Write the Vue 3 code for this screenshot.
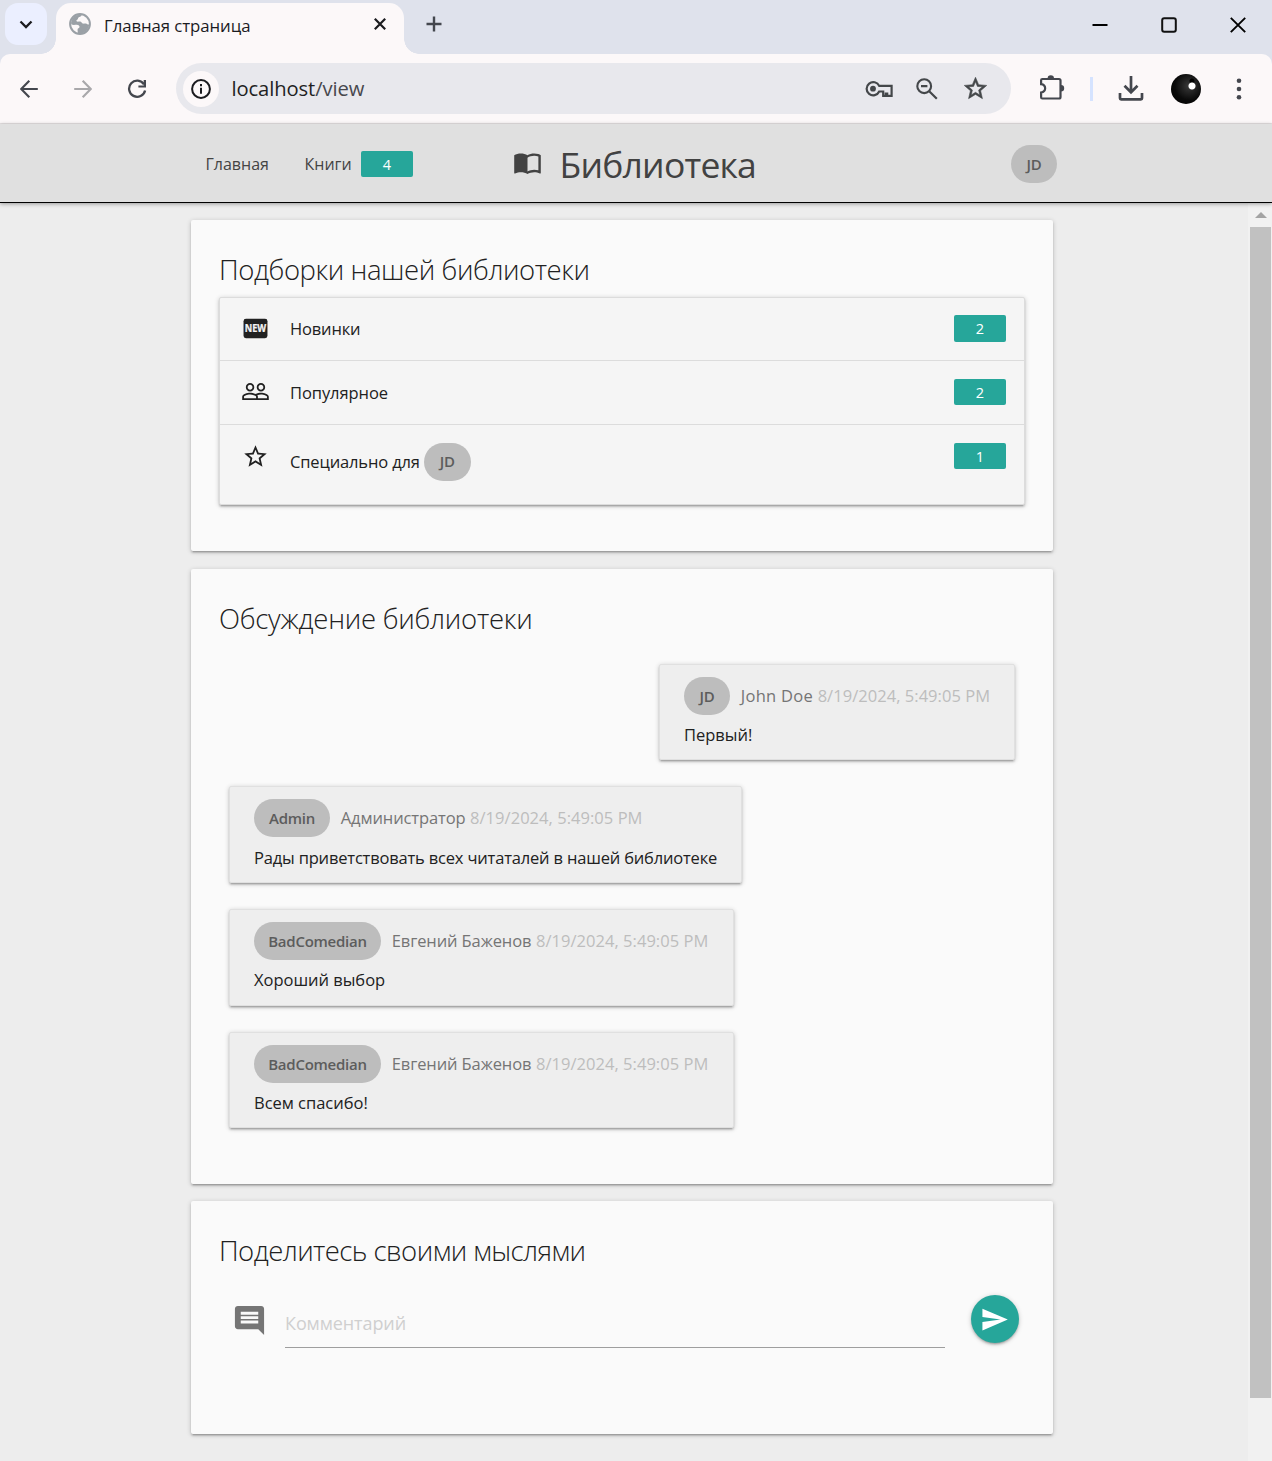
<script setup>
import { ref } from 'vue'

const draft = ref('')

const icons = {
  people:
    'M16.5 13c-1.2 0-3.07.34-4.5 1-1.43-.67-3.3-1-4.5-1C5.33 13 1 14.08 1 16.25V19h22v-2.75c0-2.17-4.33-3.25-6.5-3.25zm-4 4.5h-10v-1.25c0-.54 2.56-1.75 5-1.75s5 1.21 5 1.75v1.25zm9 0H14v-1.25c0-.46-.2-.86-.52-1.22.88-.3 1.96-.53 3.02-.53 2.44 0 5 1.21 5 1.75v1.25zM7.5 12c1.93 0 3.5-1.57 3.5-3.5S9.43 5 7.5 5 4 6.57 4 8.5 5.57 12 7.5 12zm0-5.5c1.1 0 2 .9 2 2s-.9 2-2 2-2-.9-2-2 .9-2 2-2zm9 5.5c1.93 0 3.5-1.57 3.5-3.5S18.43 5 16.5 5 13 6.57 13 8.5s1.57 3.5 3.5 3.5zm0-5.5c1.1 0 2 .9 2 2s-.9 2-2 2-2-.9-2-2 .9-2 2-2z',
  star:
    'M22 9.24l-7.19-.62L12 2 9.19 8.63 2 9.24l5.46 4.73L5.82 21 12 17.27 18.18 21l-1.63-7.03L22 9.24zM12 15.4l-3.76 2.27 1-4.28-3.32-2.88 4.38-.38L12 6.1l1.71 4.04 4.38.38-3.32 2.88 1 4.28L12 15.4z',
}

const collections = [
  { icon: 'new', title: 'Новинки', count: 2, cls: 'row-new' },
  { icon: 'people', title: 'Популярное', count: 2, cls: 'row-popular' },
  { icon: 'star', title: 'Специально для', count: 1, user: 'JD', cls: 'row-special' },
]

const comments = [
  { login: 'JD', name: 'John Doe', text: 'Первый!', own: true, cls: 'c-john' },
  { login: 'Admin', name: 'Администратор', text: 'Рады приветствовать всех читаталей в нашей библиотеке', cls: 'c-admin' },
  { login: 'BadComedian', name: 'Евгений Баженов', text: 'Хороший выбор', cls: 'c-bad' },
  { login: 'BadComedian', name: 'Евгений Баженов', text: 'Всем спасибо!', cls: 'c-bad' },
]
const date = '8/19/2024, 5:49:05 PM'
</script>

<template>
  <div class="window">
    <div class="tabstrip">
      <div class="tab-search">
        <svg width="14" height="9" viewBox="0 0 14 9"><path d="M1.5 1.5 7 7l5.500-5.500" fill="none" stroke="#1b1b1f" stroke-width="2.300" /></svg>
      </div>
      <div class="tab">
        <svg class="favicon" width="22" height="22" viewBox="0 0 22 22">
          <circle cx="11" cy="11" r="9.900" fill="#fcf8f9" stroke="#9aa0a6" stroke-width="2" />
          <path d="M12.800 1.500c-.2 1.800-1.300 2.300-2.600 2.600-1.300.4-.8 1.600-1.700 2.400-.8.600-1.500.9-.9 1.700.8.900 2.400.1 3.700.4 1.400.3 1.300 1.800 2.700 2 1.600.2 2.600-.4 3.900.3.900.5 1.400.8 2.300.7-.3 3.700-3 7.500-6.900 8.700-1.700.500-3.300.600-4.600.200.300-1.600-.300-3-.1-4.200.200-1.200 1.700-1.100 1.900-2.300.2-1.300-.9-2.300-2.700-2.300-1.700 0-3.700.700-5.600-.5C1.500 6.500 5.500 1 12.800 1.500z" fill="#9aa0a6" transform="rotate(180 11 11)" />
        </svg>
        <span class="tab-title">Главная страница</span>
        <svg class="tab-close" width="12" height="12" viewBox="0 0 12 12"><path d="M.8.8l10.400 10.400M11.200.8.8 11.200" stroke="#1b1b1f" stroke-width="2.200" /></svg>
      </div>
      <svg class="tab-add" width="16" height="16" viewBox="0 0 16 16"><path d="M8 .5v15M.5 8h15" stroke="#44474e" stroke-width="2.400" /></svg>
      <div class="win-controls">
        <svg width="16" height="16" viewBox="0 0 16 16"><path d="M.5 8h15" stroke="#000" stroke-width="2" /></svg>
        <svg width="16" height="16" viewBox="0 0 16 16"><rect x="1.200" y="1.200" width="13.600" height="13.600" rx="2" fill="none" stroke="#111" stroke-width="2" /></svg>
        <svg width="16" height="16" viewBox="0 0 16 16"><path d="M.8.8l14.400 14.400M15.200.8.8 15.200" stroke="#000" stroke-width="1.900" /></svg>
      </div>
    </div>

    <div class="toolbar">
      <div class="nav-btn"><svg width="18" height="18" viewBox="0 0 18 18"><path d="M17.800 9H1.500M9.300.8 1.200 9l8.100 8.200" fill="none" stroke="#44474e" stroke-width="2.200" /></svg></div>
      <div class="nav-btn"><svg width="18" height="18" viewBox="0 0 18 18"><path d="M.2 9h16.300M8.700.8 16.800 9l-8.100 8.200" fill="none" stroke="#a9a8ab" stroke-width="2.200" /></svg></div>
      <div class="nav-btn"><svg width="20" height="20" viewBox="0 0 20 20"><path d="M17 5.300A8.100 8.100 0 1 0 18.100 11.500" fill="none" stroke="#44474e" stroke-width="2.300" /><path d="M19 1v7.600h-7.600V6.400h5.300V1z" fill="#44474e" /></svg></div>
      <div class="omnibox">
        <div class="site-info">
          <svg width="20" height="20" viewBox="0 0 20 20"><circle cx="10" cy="10" r="8.900" fill="none" stroke="#1b1b1f" stroke-width="2" /><path d="M10 8.800v6M10 5v2.200" stroke="#1b1b1f" stroke-width="2" /></svg>
        </div>
        <span class="url">localhost<span class="path">/view</span></span>
        <div class="box-btn">
          <svg width="28" height="18" viewBox="0 0 28 18">
            <path d="M13.600 6.200A6.600 6.600 0 1 0 13.600 11.800H17.600v4.400h2.600v-2.400h1.400v2.400h4.400V6.200z" transform="translate(.6 -.3)" fill="none" stroke="#44474a" stroke-width="2.200" />
            <circle cx="8" cy="8.700" r="2.900" fill="#44474a" />
          </svg>
        </div>
        <div class="box-btn">
          <svg width="22" height="22" viewBox="0 0 22 22"><circle cx="8.200" cy="8.200" r="6.900" fill="none" stroke="#44474a" stroke-width="2.100" /><path d="M5 8.200h6.400M13.200 13.200l7.600 7.600" stroke="#44474a" stroke-width="2.200" /></svg>
        </div>
        <div class="box-btn"><svg width="27" height="27" viewBox="0 0 24 24"><path :d="icons.star" fill="#44474a" stroke="#44474a" stroke-width=".5" /></svg></div>
      </div>
      <div class="ext-btn">
        <svg width="26" height="26" viewBox="0 0 26 26">
          <path d="M3.400 5H20a1.500 1.500 0 0 1 1.500 1.500V23a1.500 1.500 0 0 1-1.500 1.500H3.400A1.300 1.300 0 0 1 2.100 23.200V18.500C7.500 17.600 7.500 11 2.100 10.200V6.300A1.300 1.300 0 0 1 3.400 5z" fill="none" stroke="#44474e" stroke-width="2.200" />
          <path d="M8.600 4.500a3.200 3.200 0 0 1 6.400 0zM22 11a3.200 3.200 0 0 1 0 6.400z" fill="#44474e" />
        </svg>
      </div>
      <div class="divider"></div>
      <div class="dl-btn">
        <svg width="26" height="25" viewBox="0 0 26 25"><path d="M13 0v15.500M6.500 9.800 13 16.300l6.500-6.500M2 17v5.200c0 .6.500 1.100 1.100 1.100h19.800c.6 0 1.100-.5 1.100-1.100V17" fill="none" stroke="#44474e" stroke-width="2.700" /></svg>
      </div>
      <div class="profile"></div>
      <div class="menu-btn"><svg width="6" height="22" viewBox="0 0 6 22"><g fill="#44474e"><circle cx="3" cy="2.700" r="2.300" /><circle cx="3" cy="11" r="2.300" /><circle cx="3" cy="19.300" r="2.300" /></g></svg></div>
    </div>

    <header class="site-nav">
      <a class="nav-home">Главная</a>
      <a class="nav-books">Книги</a>
      <span class="badge">4</span>
      <div class="brand">
        <svg width="29" height="29" viewBox="0 0 24 24"><path fill="#424242" d="M21 5c-1.110-.350-2.330-.5-3.500-.5-1.950 0-4.050.4-5.500 1.500-1.450-1.100-3.550-1.500-5.500-1.500S2.450 4.900 1 6v14.650c0 .25.25.5.5.5.1 0 .15-.05.25-.05C3.100 20.450 5.050 20 6.500 20c1.950 0 4.050.4 5.500 1.500 1.350-.85 3.800-1.500 5.500-1.500 1.650 0 3.350.3 4.750 1.050.1.05.15.05.25.05.25 0 .5-.25.5-.5V6c-.6-.45-1.250-.75-2-1zm0 13.500c-1.100-.35-2.300-.5-3.500-.5-1.700 0-4.150.65-5.500 1.500V8c1.350-.85 3.800-1.500 5.500-1.500 1.200 0 2.400.15 3.500.5v11.500z" /></svg>
        <span>Библиотека</span>
      </div>
      <span class="chip chip-jd">JD</span>
    </header>

    <div class="viewport">
      <main>
        <section class="card card-collections">
          <h2 class="h-collections">Подборки нашей библиотеки</h2>
          <ul class="list">
            <li v-for="row in collections" :key="row.title" :class="row.cls">
              <svg v-if="row.icon === 'new'" class="row-icon" viewBox="0 0 24 24">
                <rect x="2.100" y="4" width="19.800" height="16" rx="2" fill="#212121" />
                <text x="12" y="14.900" text-anchor="middle" textLength="17.800" lengthAdjust="spacingAndGlyphs" class="new-label">NEW</text>
              </svg>
              <svg v-else class="row-icon" viewBox="0 0 24 24"><path :d="icons[row.icon]" fill="#212121" /></svg>
              <span class="row-title">{{ row.title }}</span>
              <span v-if="row.user" class="chip chip-jd">{{ row.user }}</span>
              <span class="badge">{{ row.count }}</span>
            </li>
          </ul>
        </section>

        <section class="card card-talk">
          <h2 class="h-talk">Обсуждение библиотеки</h2>
          <div class="comments">
            <article v-for="c in comments" :key="c.text" class="comment" :class="[c.cls, { own: c.own }]">
              <div class="comment-head">
                <span class="chip">{{ c.login }}</span>
                <span class="author">{{ c.name }}</span>
                <time>{{ date }}</time>
              </div>
              <p>{{ c.text }}</p>
            </article>
          </div>
        </section>

        <section class="card card-form">
          <h2 class="h-form">Поделитесь своими мыслями</h2>
          <form @submit.prevent>
            <svg class="comment-icon" width="35" height="35" viewBox="0 0 24 24"><path fill="#757575" d="M21.990 4c0-1.100-.89-2-1.990-2H4c-1.100 0-2 .9-2 2v12c0 1.100.9 2 2 2h14l4 4-.01-18zM18 14H6v-2h12v2zm0-3H6V9h12v2zm0-3H6V6h12v2z" /></svg>
            <input v-model="draft" placeholder="Комментарий" />
            <button class="send" aria-label="Отправить">
              <svg width="29" height="29" viewBox="0 0 24 24"><path fill="#fff" d="M2.010 21L23 12 2.010 3 2 10l15 2-15 2z" /></svg>
            </button>
          </form>
        </section>
      </main>
      <div class="scrollbar">
        <svg width="12" height="6" viewBox="0 0 12 6"><path d="M6 0l6 6H0z" fill="#a3a3a3" /></svg>
        <div class="thumb"></div>
      </div>
    </div>
  </div>
</template>

<style>
body {
  background: #ededed;
}
</style>

<style scoped>
* {
  box-sizing: border-box;
}
.window {
  width: 1272px;
  height: 1461px;
  overflow: hidden;
  display: flex;
  flex-direction: column;
  font-family: 'Open Sans', 'Noto Sans', sans-serif;
  font-size: 16.5px;
  color: #212121;
}
svg {
  display: block;
  flex: none;
}

/* browser tab strip */
.tabstrip {
  height: 54px;
  flex: none;
  display: flex;
  align-items: flex-start;
  padding: 3px 0 0 5px;
  background: #dfe2ec;
}
.tab-search {
  width: 42px;
  height: 42px;
  border-radius: 13px;
  background: #ebefff;
  display: flex;
  align-items: center;
  justify-content: center;
}
.tab {
  position: relative;
  width: 348px;
  height: 51px;
  margin-left: 9px;
  padding: 0 18px 9px 13px;
  border-radius: 15px 15px 0 0;
  background: #fcf8f9;
  display: flex;
  align-items: center;
}
.tab::before,
.tab::after {
  content: '';
  position: absolute;
  bottom: 0;
  width: 15px;
  height: 15px;
}
.tab::before {
  left: -15px;
  background: radial-gradient(circle at 0 0, transparent 14.5px, #fcf8f9 15px);
}
.tab::after {
  right: -15px;
  background: radial-gradient(circle at 100% 0, transparent 14.5px, #fcf8f9 15px);
}
.favicon {
  transform: rotate(180deg);
}
.tab-title {
  margin-left: 13px;
  padding-top: 2px;
  flex: 1;
  font-size: 16.8px;
  letter-spacing: -0.07px;
  color: #1b1b1f;
}
.tab-add {
  margin: 13px 0 0 22px;
}
.win-controls {
  margin: 14px 26px 0 auto;
  display: flex;
  gap: 53px;
}

/* browser toolbar */
.toolbar {
  height: 70px;
  flex: none;
  display: flex;
  align-items: center;
  padding-left: 2px;
  background: #fcf8f9;
  border-bottom: 1px solid #e6e2e3;
  border-radius: 10px 10px 0 0;
  box-shadow: 0 -10px 0 0 #dfe2ec;
  clip-path: inset(0);
}
.nav-btn {
  width: 54px;
  display: flex;
  justify-content: center;
}
.omnibox {
  width: 835px;
  height: 51px;
  margin-left: 12px;
  padding: 0 12px 0 7px;
  border-radius: 26px;
  background: #e8e8ed;
  display: flex;
  align-items: center;
}
.site-info {
  width: 36px;
  height: 36px;
  border-radius: 50%;
  background: #fcf8f9;
  display: flex;
  align-items: center;
  justify-content: center;
}
.url {
  margin-left: 12.5px;
  padding-bottom: 2px;
  flex: 1;
  font-size: 20.2px;
  letter-spacing: -0.1px;
  color: #1f1f23;
}
.path {
  color: #47474d;
}
.box-btn {
  width: 48px;
  display: flex;
  justify-content: center;
}
.ext-btn,
.dl-btn,
.menu-btn {
  width: 52px;
  display: flex;
  justify-content: center;
}
.ext-btn {
  margin-left: 15px;
  padding-bottom: 3px;
}
.divider {
  width: 3px;
  height: 24px;
  margin: 0 12px;
  background: #d5e3ff;
}
.profile {
  width: 30px;
  height: 30px;
  margin: 0 12px 0 14px;
  border-radius: 50%;
  background:
    radial-gradient(circle at 21px 12px, #fff 3px, transparent 4px),
    radial-gradient(circle at 21px 7px, #000 2px, transparent 3px),
    radial-gradient(circle at 18px 12px, #3a3a3a, #0a0a0a 55%, #000);
}

/* site header */
.site-nav {
  position: relative;
  height: 79px;
  flex: none;
  display: flex;
  align-items: center;
  padding: 2px 215px 0 205.5px;
  background: #e0e0e0;
  border-bottom: 1px solid #000;
  box-shadow: 0 1px 4px rgba(0, 0, 0, 0.35);
  color: #444;
}
.nav-home,
.nav-books {
  font-size: 16px;
}
.nav-home {
  width: 99px;
}
.nav-books {
  width: 56.5px;
}
.badge {
  width: 52px;
  height: 26px;
  flex: none;
  border-radius: 2px;
  background: #26a69a;
  color: #fff;
  font-size: 14.5px;
  line-height: 27px;
  text-align: center;
}
.brand {
  margin-left: 100px;
  display: flex;
  align-items: center;
  font-size: 35.5px;
  line-height: 50px;
  letter-spacing: -0.78px;
  color: #424242;
}
.brand svg {
  margin-bottom: 3px;
}
.brand span {
  margin-left: 17.5px;
}
.chip {
  height: 38px;
  flex: none;
  padding: 0 14px;
  border-radius: 19px;
  background: #bdbdbd;
  color: #5c5c5c;
  font-size: 15px;
  font-weight: 600;
  line-height: 38px;
  text-align: center;
  letter-spacing: -0.25px;
}
.chip-jd {
  width: 46px;
  padding: 0;
}
.site-nav .chip {
  margin-left: auto;
}

/* page */
.viewport {
  flex: 1;
  display: flex;
  justify-content: space-between;
  background: #ededed;
}
main {
  width: 862px;
  margin-left: 191px;
  padding-top: 17px;
}
.card {
  padding: 30px 28px 0;
  border-radius: 2px;
  background: #fafafa;
}
.card,
.list,
.comment,
.send {
  box-shadow:
    0 2px 2px 0 rgba(0, 0, 0, 0.14),
    0 3px 1px -2px rgba(0, 0, 0, 0.12),
    0 1px 5px 0 rgba(0, 0, 0, 0.2);
}
.card-collections {
  height: 331px;
}
.card-talk {
  height: 615px;
  margin-top: 18px;
}
.card-form {
  height: 233px;
  margin-top: 17px;
}
h2 {
  margin: 0 0 -1px;
  font-size: 27.5px;
  font-weight: 300;
  line-height: 40px;
  white-space: nowrap;
}
.h-collections {
  letter-spacing: -0.42px;
}
.h-talk {
  letter-spacing: -0.25px;
}
.h-form {
  letter-spacing: -0.55px;
}

.list {
  margin: 8px 0 0;
  padding: 0;
  list-style: none;
  border: 1px solid #dcdcdc;
  border-radius: 2px;
  background: #f5f5f5;
}
.list li {
  height: 64px;
  display: flex;
  align-items: flex-start;
  padding: 0 18px 0 21px;
  border-bottom: 1px solid #dcdcdc;
  line-height: 63px;
}
.list .row-new {
  height: 63px;
  line-height: 62px;
}
.list .row-special {
  height: 79px;
  border-bottom: 0;
  line-height: 74px;
}
.row-icon {
  width: 29px;
  height: 29px;
  margin: 16px 20px 0 0;
}
.row-new .row-icon {
  margin-top: 15.5px;
}
.row-special .row-icon {
  width: 27px;
  height: 27px;
  margin: 18px 21px 0 1px;
}
.new-label {
  font-size: 8px;
  font-weight: 700;
  line-height: 1;
  fill: #f4f4f4;
  stroke: #f4f4f4;
  stroke-width: 0.2px;
}
.row-title {
  letter-spacing: -0.15px;
}
.row-popular .row-title {
  letter-spacing: -0.08px;
}
.row-special .row-title {
  letter-spacing: -0.14px;
}
.list .chip {
  width: 47px;
  margin: 18px 0 0 4px;
  line-height: 37px;
}
.list .badge {
  margin: 18px 0 0 auto;
}
.row-new .badge {
  height: 27px;
  margin-top: 17px;
}

.comments {
  margin-top: 25.7px;
  padding: 0 10px;
  display: flex;
  flex-direction: column;
  align-items: flex-start;
  gap: 26.2px;
}
.comment {
  width: 505px;
  height: 96.5px;
  padding: 12px 24px 0;
  border: 1px solid #e0e0e0;
  border-radius: 2px;
  background: #eee;
}
.c-admin {
  width: 513px;
}
.own {
  width: 356px;
  padding-top: 12.4px;
  align-self: flex-end;
}
.comment-head {
  height: 38px;
  display: flex;
  align-items: center;
  white-space: nowrap;
}
.comment p {
  margin: 7.8px 0 0;
  line-height: 24px;
  white-space: nowrap;
  letter-spacing: -0.02px;
}
.c-john .chip {
  width: 46px;
  padding: 0;
}
.c-admin p {
  margin-top: 8.5px;
  letter-spacing: -0.18px;
}
.c-admin .chip {
  width: 76px;
}
.c-bad .chip {
  width: 127px;
}
.author,
time {
  padding-bottom: 1.5px;
}
.author {
  margin: 0 4.5px 0 10.7px;
  color: #757575;
  letter-spacing: -0.1px;
}
.c-john .author {
  letter-spacing: 0.3px;
}
time {
  color: #bdbdbd;
  letter-spacing: 0.04px;
}

form {
  display: flex;
  align-items: flex-start;
  padding: 25px 6px 0 13px;
}
.comment-icon {
  margin-top: 8px;
}
input {
  width: 660px;
  height: 53px;
  margin-left: 18px;
  padding: 4px 0 0;
  border: 0;
  border-bottom: 1px solid #9e9e9e;
  outline: 0;
  background: transparent;
  font: 18px 'Open Sans', 'Noto Sans', sans-serif;
  letter-spacing: -0.1px;
}
input::placeholder {
  color: #cfcfcf;
  opacity: 1;
}
.send {
  width: 48px;
  height: 48px;
  margin-left: auto;
  padding: 0 1px 0 0;
  border: 0;
  border-radius: 50%;
  background: #26a69a;
  display: flex;
  align-items: center;
  justify-content: center;
}

.scrollbar {
  width: 24px;
  padding: 9px 1px 0 2px;
  display: flex;
  flex-direction: column;
  align-items: center;
  background: #f1f1f1;
}
.thumb {
  width: 21px;
  height: 1171px;
  margin-top: 9px;
  background: #c1c1c1;
}
</style>
